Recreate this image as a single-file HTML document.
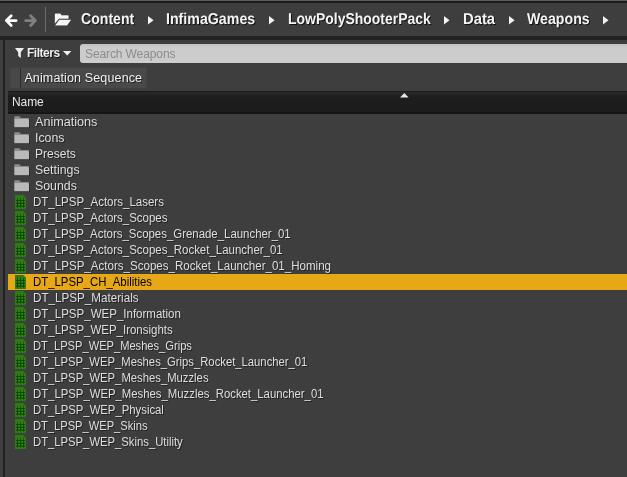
<!DOCTYPE html>
<html><head><meta charset="utf-8"><title>Content Browser</title>
<style>
html,body{margin:0;padding:0;}
body{width:627px;height:477px;overflow:hidden;background:#3e3e3e;position:relative;font-family:"Liberation Sans",sans-serif;color:#e6e6e6;}
#wrap{position:absolute;left:0;top:0;width:627px;height:477px;will-change:transform;}
.abs{position:absolute;}
#topline0{left:0;top:0;width:627px;height:1px;background:#5c5c5c;}
#topline1{left:0;top:1px;width:627px;height:2px;background:#1c1c1c;}
#sep{left:0;top:36px;width:627px;height:4px;background:#222222;}
#leftline{left:3px;top:40px;width:2px;height:437px;background:#222222;}
#vsep{left:45px;top:7px;width:1px;height:25px;background:#6e6e6e;}
.bc{text-rendering:geometricPrecision;position:absolute;top:9.6px;font-weight:bold;font-size:15.7px;line-height:19px;transform-origin:0 50%;color:#f4f4f4;white-space:nowrap;text-shadow:1px 1px 0 #111;}
.ar{position:absolute;top:15.7px;filter:drop-shadow(0.8px 0.8px 0 #1a1a1a);}
#search{left:80px;top:44px;width:547px;height:19px;background:linear-gradient(#bcbcbc 0,#c4c4c4 1px,#c9c9c9 2.5px,#cccccc 4px,#cccccc 17px,#d2d2d2 18px,#c4c4c4 19px);border-radius:3px 0 0 3px;}
#search span{position:absolute;left:5px;top:2px;font-size:12px;line-height:17px;color:#8b8b8b;white-space:nowrap;letter-spacing:-0.105px}
#filters{left:27px;top:45px;font-weight:bold;font-size:12px;line-height:17px;color:#f0f0f0;letter-spacing:-0.470px;text-shadow:1px 1px 0 #111;}
#tag{left:21px;top:68px;width:125px;height:20px;background:#494949;box-shadow:1.5px 0 0 #424242,0 1px 0 #414141,0 -1px 0 #414141;}
#tagbar{left:11px;top:68px;width:10px;height:20px;background:#484848;border-right:1px solid #2c2c2c;box-sizing:border-box;box-shadow:-2px 0 0 #424242,0 1px 0 #414141,0 -1px 0 #414141;}
#tag span{position:absolute;left:3.4px;top:0.7px;font-size:12.5px;line-height:18px;color:#f0f0f0;white-space:nowrap;text-shadow:1px 1px 0 #222;letter-spacing:0.136px}
#hdr{left:8px;top:91px;width:619px;height:23px;background:linear-gradient(#1b1b1b 0,#1b1b1b 1px,#2a2a2a 1px,#1d1d1d 6px,#1c1c1c 21px,#151515 21.5px,#151515 22.5px,#2a2a2a 23px);}
#hdr span{position:absolute;left:4px;top:3px;font-size:12px;line-height:16px;color:#e8e8e8;letter-spacing:-0.080px}
.row{position:absolute;left:8px;width:619px;height:16px;}
.row.sel{background:#e6a817;}
.row .t{position:absolute;top:0;font-size:12.3px;line-height:16px;transform-origin:0 50%;white-space:nowrap;color:#dfdfdf;text-shadow:1px 1px 0 rgba(0,0,0,0.45);}
.row.sel .t{color:#000;text-shadow:none;}
.ft{left:27px;}
.dt{left:25px;}
.fi{position:absolute;left:5.7px;top:1.6px;}
.di{position:absolute;left:7px;top:1px;}
</style></head><body><div id="wrap">
<div class="abs" id="topline0"></div><div class="abs" id="topline1"></div>
<svg class="abs" style="left:4px;top:13px;filter:drop-shadow(0.6px 0.8px 0 #1a1a1a)" width="15" height="16" viewBox="0 0 15 16"><path d="M7.2 2.7 L2.4 7.6 L7.2 12.5 M2.8 7.6 H12.2" stroke="#ffffff" stroke-width="2.8" fill="none" stroke-linecap="round" stroke-linejoin="round"/></svg>
<svg class="abs" style="left:23px;top:13px" width="15" height="16" viewBox="0 0 15 16"><path d="M7.6 2.7 L12.4 7.6 L7.6 12.5 M12 7.6 H2.6" stroke="#808080" stroke-width="2.8" fill="none" stroke-linecap="round" stroke-linejoin="round"/></svg>
<div class="abs" id="vsep"></div>
<svg class="abs" style="left:54px;top:12.5px;filter:drop-shadow(0.7px 0.8px 0 #161616)" width="19" height="14" viewBox="0 0 19 14"><path d="M0.8 1 Q0.8 0.4 1.4 0.4 H6.4 L7.5 2.3 H14 Q14.6 2.3 14.6 2.9 V5.8 H5 L0.8 10.8 Z" fill="#f6f6f6"/><path d="M5.3 6.7 H17.2 L13 12.5 H1.1 Z" fill="#f6f6f6"/></svg>
<span class="bc" style="left:81px;transform:scaleX(0.8988)">Content</span><span class="bc" style="left:166px;transform:scaleX(0.9052)">InfimaGames</span><span class="bc" style="left:288px;transform:scaleX(0.8900)">LowPolyShooterPack</span><span class="bc" style="left:463px;transform:scaleX(0.9444)">Data</span><span class="bc" style="left:527px;transform:scaleX(0.9021)">Weapons</span><svg class="ar" style="left:147.6px" width="6" height="9" viewBox="0 0 6 9"><path d="M0 0 L5.6 4.2 L0 8.4 Z" fill="#f4f4f4"/></svg><svg class="ar" style="left:269.4px" width="6" height="9" viewBox="0 0 6 9"><path d="M0 0 L5.6 4.2 L0 8.4 Z" fill="#f4f4f4"/></svg><svg class="ar" style="left:444.3px" width="6" height="9" viewBox="0 0 6 9"><path d="M0 0 L5.6 4.2 L0 8.4 Z" fill="#f4f4f4"/></svg><svg class="ar" style="left:508.5px" width="6" height="9" viewBox="0 0 6 9"><path d="M0 0 L5.6 4.2 L0 8.4 Z" fill="#f4f4f4"/></svg><svg class="ar" style="left:602.5px" width="6" height="9" viewBox="0 0 6 9"><path d="M0 0 L5.6 4.2 L0 8.4 Z" fill="#f4f4f4"/></svg>
<div class="abs" id="sep"></div>
<div class="abs" id="leftline"></div>
<svg class="abs" style="left:15px;top:47.5px" width="10" height="11" viewBox="0 0 10 11"><path d="M0 0 H9 L5.8 4.2 V10 L3.2 8 V4.2 Z" fill="#f0f0f0"/></svg>
<div class="abs" id="filters">Filters</div>
<svg class="abs" style="left:63px;top:51px" width="9" height="5" viewBox="0 0 9 5"><path d="M0 0 H8.4 L4.2 4.4 Z" fill="#f0f0f0"/></svg>
<div class="abs" id="search"><span>Search Weapons</span></div>
<div class="abs" id="tagbar"></div>
<div class="abs" id="tag"><span>Animation Sequence</span></div>
<div class="abs" id="hdr"><span>Name</span></div>
<svg class="abs" style="left:399.7px;top:92.8px" width="9" height="5" viewBox="0 0 9 5"><path d="M0 4.6 L4.3 0 L8.6 4.6 Z" fill="#e6e6e6"/></svg>
<div class="row" style="top:114px"><svg class="fi" width="17" height="13" viewBox="0 0 17 13"><path d="M0.3 1 Q0.3 0.3 1 0.3 H5.6 L6.8 1.9 H14.3 Q15 1.9 15 2.6 V11.3 H0.3 Z" fill="#2b2b2b" transform="translate(0.8,0.8)"/><path d="M0.3 1 Q0.3 0.3 1 0.3 H5.6 L6.8 1.9 H14.3 Q15 1.9 15 2.6 V3.2 H0.3 Z" fill="#8c8c8c"/><rect x="0.3" y="2.9" width="14.7" height="8.4" rx="0.6" fill="#b9b9b9"/></svg><span class="t ft" style="transform:scaleX(1.0253)">Animations</span></div><div class="row" style="top:130px"><svg class="fi" width="17" height="13" viewBox="0 0 17 13"><path d="M0.3 1 Q0.3 0.3 1 0.3 H5.6 L6.8 1.9 H14.3 Q15 1.9 15 2.6 V11.3 H0.3 Z" fill="#2b2b2b" transform="translate(0.8,0.8)"/><path d="M0.3 1 Q0.3 0.3 1 0.3 H5.6 L6.8 1.9 H14.3 Q15 1.9 15 2.6 V3.2 H0.3 Z" fill="#8c8c8c"/><rect x="0.3" y="2.9" width="14.7" height="8.4" rx="0.6" fill="#b9b9b9"/></svg><span class="t ft" style="transform:scaleX(1.0040)">Icons</span></div><div class="row" style="top:146px"><svg class="fi" width="17" height="13" viewBox="0 0 17 13"><path d="M0.3 1 Q0.3 0.3 1 0.3 H5.6 L6.8 1.9 H14.3 Q15 1.9 15 2.6 V11.3 H0.3 Z" fill="#2b2b2b" transform="translate(0.8,0.8)"/><path d="M0.3 1 Q0.3 0.3 1 0.3 H5.6 L6.8 1.9 H14.3 Q15 1.9 15 2.6 V3.2 H0.3 Z" fill="#8c8c8c"/><rect x="0.3" y="2.9" width="14.7" height="8.4" rx="0.6" fill="#b9b9b9"/></svg><span class="t ft" style="transform:scaleX(0.9783)">Presets</span></div><div class="row" style="top:162px"><svg class="fi" width="17" height="13" viewBox="0 0 17 13"><path d="M0.3 1 Q0.3 0.3 1 0.3 H5.6 L6.8 1.9 H14.3 Q15 1.9 15 2.6 V11.3 H0.3 Z" fill="#2b2b2b" transform="translate(0.8,0.8)"/><path d="M0.3 1 Q0.3 0.3 1 0.3 H5.6 L6.8 1.9 H14.3 Q15 1.9 15 2.6 V3.2 H0.3 Z" fill="#8c8c8c"/><rect x="0.3" y="2.9" width="14.7" height="8.4" rx="0.6" fill="#b9b9b9"/></svg><span class="t ft" style="transform:scaleX(1.0032)">Settings</span></div><div class="row" style="top:178px"><svg class="fi" width="17" height="13" viewBox="0 0 17 13"><path d="M0.3 1 Q0.3 0.3 1 0.3 H5.6 L6.8 1.9 H14.3 Q15 1.9 15 2.6 V11.3 H0.3 Z" fill="#2b2b2b" transform="translate(0.8,0.8)"/><path d="M0.3 1 Q0.3 0.3 1 0.3 H5.6 L6.8 1.9 H14.3 Q15 1.9 15 2.6 V3.2 H0.3 Z" fill="#8c8c8c"/><rect x="0.3" y="2.9" width="14.7" height="8.4" rx="0.6" fill="#b9b9b9"/></svg><span class="t ft" style="transform:scaleX(1.0027)">Sounds</span></div><div class="row" style="top:194px"><svg class="di" width="11" height="15" viewBox="0 0 11 15"><path d="M0 0 H8.2 L11 2.8 V14 H0 Z" fill="#2b7a13"/><rect x="1" y="3.3" width="9" height="9.3" fill="#398a1f"/><path d="M2.5 3.3 V12.6 M5.5 3.3 V12.6 M8.5 3.3 V12.6 M1 5.5 H10 M1 8.3 H10 M1 11.1 H10" stroke="#0e4a06" stroke-width="1.2" fill="none"/></svg><span class="t dt" style="transform:scaleX(0.9343)">DT_LPSP_Actors_Lasers</span></div><div class="row" style="top:210px"><svg class="di" width="11" height="15" viewBox="0 0 11 15"><path d="M0 0 H8.2 L11 2.8 V14 H0 Z" fill="#2b7a13"/><rect x="1" y="3.3" width="9" height="9.3" fill="#398a1f"/><path d="M2.5 3.3 V12.6 M5.5 3.3 V12.6 M8.5 3.3 V12.6 M1 5.5 H10 M1 8.3 H10 M1 11.1 H10" stroke="#0e4a06" stroke-width="1.2" fill="none"/></svg><span class="t dt" style="transform:scaleX(0.9320)">DT_LPSP_Actors_Scopes</span></div><div class="row" style="top:226px"><svg class="di" width="11" height="15" viewBox="0 0 11 15"><path d="M0 0 H8.2 L11 2.8 V14 H0 Z" fill="#2b7a13"/><rect x="1" y="3.3" width="9" height="9.3" fill="#398a1f"/><path d="M2.5 3.3 V12.6 M5.5 3.3 V12.6 M8.5 3.3 V12.6 M1 5.5 H10 M1 8.3 H10 M1 11.1 H10" stroke="#0e4a06" stroke-width="1.2" fill="none"/></svg><span class="t dt" style="transform:scaleX(0.9285)">DT_LPSP_Actors_Scopes_Grenade_Launcher_01</span></div><div class="row" style="top:242px"><svg class="di" width="11" height="15" viewBox="0 0 11 15"><path d="M0 0 H8.2 L11 2.8 V14 H0 Z" fill="#2b7a13"/><rect x="1" y="3.3" width="9" height="9.3" fill="#398a1f"/><path d="M2.5 3.3 V12.6 M5.5 3.3 V12.6 M8.5 3.3 V12.6 M1 5.5 H10 M1 8.3 H10 M1 11.1 H10" stroke="#0e4a06" stroke-width="1.2" fill="none"/></svg><span class="t dt" style="transform:scaleX(0.9318)">DT_LPSP_Actors_Scopes_Rocket_Launcher_01</span></div><div class="row" style="top:258px"><svg class="di" width="11" height="15" viewBox="0 0 11 15"><path d="M0 0 H8.2 L11 2.8 V14 H0 Z" fill="#2b7a13"/><rect x="1" y="3.3" width="9" height="9.3" fill="#398a1f"/><path d="M2.5 3.3 V12.6 M5.5 3.3 V12.6 M8.5 3.3 V12.6 M1 5.5 H10 M1 8.3 H10 M1 11.1 H10" stroke="#0e4a06" stroke-width="1.2" fill="none"/></svg><span class="t dt" style="transform:scaleX(0.9396)">DT_LPSP_Actors_Scopes_Rocket_Launcher_01_Homing</span></div><div class="row sel" style="top:274px"><svg class="di" width="11" height="15" viewBox="0 0 11 15"><path d="M0 0 H8.2 L11 2.8 V14 H0 Z" fill="#2b7a13"/><rect x="1" y="3.3" width="9" height="9.3" fill="#398a1f"/><path d="M2.5 3.3 V12.6 M5.5 3.3 V12.6 M8.5 3.3 V12.6 M1 5.5 H10 M1 8.3 H10 M1 11.1 H10" stroke="#0e4a06" stroke-width="1.2" fill="none"/></svg><span class="t dt" style="transform:scaleX(0.9258)">DT_LPSP_CH_Abilities</span></div><div class="row" style="top:290px"><svg class="di" width="11" height="15" viewBox="0 0 11 15"><path d="M0 0 H8.2 L11 2.8 V14 H0 Z" fill="#2b7a13"/><rect x="1" y="3.3" width="9" height="9.3" fill="#398a1f"/><path d="M2.5 3.3 V12.6 M5.5 3.3 V12.6 M8.5 3.3 V12.6 M1 5.5 H10 M1 8.3 H10 M1 11.1 H10" stroke="#0e4a06" stroke-width="1.2" fill="none"/></svg><span class="t dt" style="transform:scaleX(0.9478)">DT_LPSP_Materials</span></div><div class="row" style="top:306px"><svg class="di" width="11" height="15" viewBox="0 0 11 15"><path d="M0 0 H8.2 L11 2.8 V14 H0 Z" fill="#2b7a13"/><rect x="1" y="3.3" width="9" height="9.3" fill="#398a1f"/><path d="M2.5 3.3 V12.6 M5.5 3.3 V12.6 M8.5 3.3 V12.6 M1 5.5 H10 M1 8.3 H10 M1 11.1 H10" stroke="#0e4a06" stroke-width="1.2" fill="none"/></svg><span class="t dt" style="transform:scaleX(0.9370)">DT_LPSP_WEP_Information</span></div><div class="row" style="top:322px"><svg class="di" width="11" height="15" viewBox="0 0 11 15"><path d="M0 0 H8.2 L11 2.8 V14 H0 Z" fill="#2b7a13"/><rect x="1" y="3.3" width="9" height="9.3" fill="#398a1f"/><path d="M2.5 3.3 V12.6 M5.5 3.3 V12.6 M8.5 3.3 V12.6 M1 5.5 H10 M1 8.3 H10 M1 11.1 H10" stroke="#0e4a06" stroke-width="1.2" fill="none"/></svg><span class="t dt" style="transform:scaleX(0.9336)">DT_LPSP_WEP_Ironsights</span></div><div class="row" style="top:338px"><svg class="di" width="11" height="15" viewBox="0 0 11 15"><path d="M0 0 H8.2 L11 2.8 V14 H0 Z" fill="#2b7a13"/><rect x="1" y="3.3" width="9" height="9.3" fill="#398a1f"/><path d="M2.5 3.3 V12.6 M5.5 3.3 V12.6 M8.5 3.3 V12.6 M1 5.5 H10 M1 8.3 H10 M1 11.1 H10" stroke="#0e4a06" stroke-width="1.2" fill="none"/></svg><span class="t dt" style="transform:scaleX(0.9046)">DT_LPSP_WEP_Meshes_Grips</span></div><div class="row" style="top:354px"><svg class="di" width="11" height="15" viewBox="0 0 11 15"><path d="M0 0 H8.2 L11 2.8 V14 H0 Z" fill="#2b7a13"/><rect x="1" y="3.3" width="9" height="9.3" fill="#398a1f"/><path d="M2.5 3.3 V12.6 M5.5 3.3 V12.6 M8.5 3.3 V12.6 M1 5.5 H10 M1 8.3 H10 M1 11.1 H10" stroke="#0e4a06" stroke-width="1.2" fill="none"/></svg><span class="t dt" style="transform:scaleX(0.9164)">DT_LPSP_WEP_Meshes_Grips_Rocket_Launcher_01</span></div><div class="row" style="top:370px"><svg class="di" width="11" height="15" viewBox="0 0 11 15"><path d="M0 0 H8.2 L11 2.8 V14 H0 Z" fill="#2b7a13"/><rect x="1" y="3.3" width="9" height="9.3" fill="#398a1f"/><path d="M2.5 3.3 V12.6 M5.5 3.3 V12.6 M8.5 3.3 V12.6 M1 5.5 H10 M1 8.3 H10 M1 11.1 H10" stroke="#0e4a06" stroke-width="1.2" fill="none"/></svg><span class="t dt" style="transform:scaleX(0.9173)">DT_LPSP_WEP_Meshes_Muzzles</span></div><div class="row" style="top:386px"><svg class="di" width="11" height="15" viewBox="0 0 11 15"><path d="M0 0 H8.2 L11 2.8 V14 H0 Z" fill="#2b7a13"/><rect x="1" y="3.3" width="9" height="9.3" fill="#398a1f"/><path d="M2.5 3.3 V12.6 M5.5 3.3 V12.6 M8.5 3.3 V12.6 M1 5.5 H10 M1 8.3 H10 M1 11.1 H10" stroke="#0e4a06" stroke-width="1.2" fill="none"/></svg><span class="t dt" style="transform:scaleX(0.9219)">DT_LPSP_WEP_Meshes_Muzzles_Rocket_Launcher_01</span></div><div class="row" style="top:402px"><svg class="di" width="11" height="15" viewBox="0 0 11 15"><path d="M0 0 H8.2 L11 2.8 V14 H0 Z" fill="#2b7a13"/><rect x="1" y="3.3" width="9" height="9.3" fill="#398a1f"/><path d="M2.5 3.3 V12.6 M5.5 3.3 V12.6 M8.5 3.3 V12.6 M1 5.5 H10 M1 8.3 H10 M1 11.1 H10" stroke="#0e4a06" stroke-width="1.2" fill="none"/></svg><span class="t dt" style="transform:scaleX(0.9206)">DT_LPSP_WEP_Physical</span></div><div class="row" style="top:418px"><svg class="di" width="11" height="15" viewBox="0 0 11 15"><path d="M0 0 H8.2 L11 2.8 V14 H0 Z" fill="#2b7a13"/><rect x="1" y="3.3" width="9" height="9.3" fill="#398a1f"/><path d="M2.5 3.3 V12.6 M5.5 3.3 V12.6 M8.5 3.3 V12.6 M1 5.5 H10 M1 8.3 H10 M1 11.1 H10" stroke="#0e4a06" stroke-width="1.2" fill="none"/></svg><span class="t dt" style="transform:scaleX(0.9056)">DT_LPSP_WEP_Skins</span></div><div class="row" style="top:434px"><svg class="di" width="11" height="15" viewBox="0 0 11 15"><path d="M0 0 H8.2 L11 2.8 V14 H0 Z" fill="#2b7a13"/><rect x="1" y="3.3" width="9" height="9.3" fill="#398a1f"/><path d="M2.5 3.3 V12.6 M5.5 3.3 V12.6 M8.5 3.3 V12.6 M1 5.5 H10 M1 8.3 H10 M1 11.1 H10" stroke="#0e4a06" stroke-width="1.2" fill="none"/></svg><span class="t dt" style="transform:scaleX(0.9166)">DT_LPSP_WEP_Skins_Utility</span></div>
</div></body></html>
